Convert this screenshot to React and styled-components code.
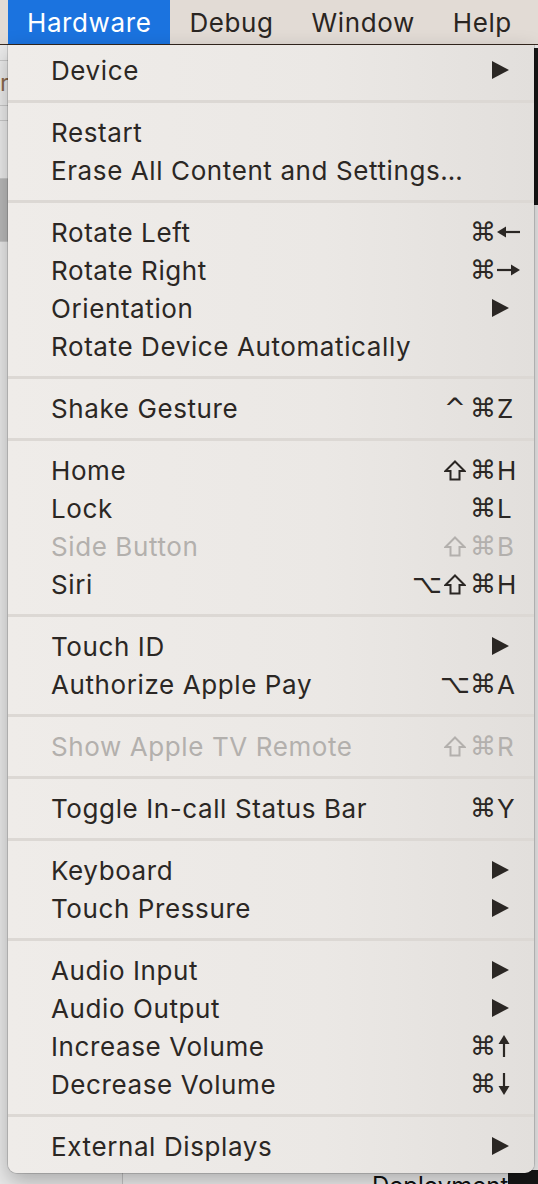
import React from 'react'
import styled, { createGlobalStyle } from 'styled-components'

const GlobalStyle = createGlobalStyle`
  html, body {
    margin: 0;
    padding: 0;
  }
  body {
    background: #ececec;
    font-family: Inter, "Noto Sans", sans-serif;
  }
`

const Screen = styled.div`
  position: relative;
  width: 538px;
  height: 1184px;
  overflow: hidden;
  display: flex;
  flex-direction: column;
  background: #ececec;
`

const MenuBar = styled.div`
  height: 44px;
  flex-shrink: 0;
  display: flex;
  align-items: stretch;
  padding-left: 8px;
  background: #e2dbd5;
  border-bottom: 1px solid #3b2c22;
`

const MenuTitle = styled.div`
  display: flex;
  align-items: center;
  padding: 0 19px;
  font-size: 26px;
  letter-spacing: 0.6px;
  color: ${p => (p.$active ? '#ffffff' : '#2a2522')};
  background: ${p => (p.$active ? '#1b73df' : 'transparent')};
`

// the window behind the open menu
const Desktop = styled.div`
  flex: 1;
  display: flex;
`

const Sidebar = styled.div`
  width: 123px;
  flex-shrink: 0;
  box-sizing: border-box;
  display: flex;
  flex-direction: column;
  background: #e6e6e6;
  border-right: 1px solid #c4c4c4;
`

const SideRow = styled.div`
  height: ${p => p.$h}px;
  background: ${p => p.$bg || '#ebebeb'};
  border-bottom: 1px solid #c9c9c9;
  font-size: 24px;
  line-height: ${p => p.$h}px;
  color: #8a6a50;
  overflow: hidden;
  white-space: nowrap;
`

const SideFill = styled.div`
  flex: 1;
  background: #e9e9e9;
`

const Main = styled.div`
  flex: 1;
  display: flex;
  flex-direction: column;
  background: #ececec;
`

const EditorTop = styled.div`
  height: 157px;
  margin-top: 3px;
  display: flex;
`

const Spacer = styled.div`
  flex: 1;
`

const DarkColumn = styled.div`
  width: 45px;
  flex-shrink: 0;
  background: #161616;
`

const Footer = styled.div`
  height: 14px;
  display: flex;
  overflow: hidden;
  background: #ededed;
`

const FooterText = styled.div`
  flex: 1;
  padding: 4px 0 0 249px;
  font-size: 24px;
  line-height: 24px;
  color: #111;
  white-space: nowrap;
`

// dropdown menu
const Dropdown = styled.div`
  position: absolute;
  top: 45px;
  left: 8px;
  width: 526px;
  padding: 6px 0 8px;
  box-sizing: border-box;
  background: linear-gradient(90deg, #efece9 0%, #ebe8e5 60%, #e2dfdc 100%);
  border-radius: 0 0 9px 9px;
  box-shadow: 0 0 0 1px rgba(0, 0, 0, 0.14), 0 8px 22px rgba(0, 0, 0, 0.28);
`

const Item = styled.div`
  height: 38px;
  display: flex;
  align-items: center;
  padding: 0 11px 0 43px;
  font-size: 26px;
  letter-spacing: 0.6px;
  color: ${p => (p.$disabled ? '#b3b0ad' : '#2b2724')};
`

const Label = styled.span`
  flex: 1;
  white-space: nowrap;
`

const Separator = styled.div`
  height: 24px;
  display: flex;
  align-items: center;
  &::after {
    content: '';
    flex: 1;
    height: 3px;
    background: #dcd8d4;
  }
`

const Shortcut = styled.span`
  display: flex;
  align-items: center;
`

const Mod = styled.span`
  width: 28px;
  height: 30px;
  display: flex;
  align-items: center;
  justify-content: center;
  font-family: "DejaVu Sans", sans-serif;
  font-size: 26px;
  letter-spacing: 0;
`

const Key = styled.span`
  width: 26px;
  height: 30px;
  display: flex;
  align-items: center;
  font-size: 26px;
  letter-spacing: 0;
`

const Icon = styled.svg`
  fill: currentColor;
  stroke: currentColor;
`

const Arrow = styled.svg`
  width: 17px;
  height: 18px;
  margin-right: 14px;
  fill: currentColor;
`

const SubmenuArrow = () => (
  <Arrow viewBox="0 0 17 18">
    <polygon points="0,0 17,9 0,18" />
  </Arrow>
)

const ShiftIcon = () => (
  <Icon width="22" height="21" viewBox="0 0 22 21">
    <polygon
      points="11,1.5 20.5,11 15.5,11 15.5,19.5 6.5,19.5 6.5,11 1.5,11"
      fill="none"
      strokeWidth="2"
      strokeLinejoin="miter"
    />
  </Icon>
)

const arrowShapes = {
  '←': { w: 23, h: 14, line: [7, 7, 23, 7], head: '0,7 9,1.5 9,12.5' },
  '→': { w: 23, h: 14, line: [0, 7, 16, 7], head: '23,7 14,1.5 14,12.5' },
  '↑': { w: 14, h: 22, line: [7, 7, 7, 22], head: '7,0 1.5,9 12.5,9' },
  '↓': { w: 14, h: 22, line: [7, 0, 7, 15], head: '7,22 1.5,13 12.5,13' },
}

const KeyArrow = ({ dir }) => {
  const s = arrowShapes[dir]
  const [x1, y1, x2, y2] = s.line
  return (
    <Icon width={s.w} height={s.h} viewBox={`0 0 ${s.w} ${s.h}`}>
      <line x1={x1} y1={y1} x2={x2} y2={y2} strokeWidth="2.2" />
      <polygon points={s.head} stroke="none" />
    </Icon>
  )
}

const sections = [
  [{ label: 'Device', sub: true }],
  [{ label: 'Restart' }, { label: 'Erase All Content and Settings…' }],
  [
    { label: 'Rotate Left', mods: ['⌘'], key: '←' },
    { label: 'Rotate Right', mods: ['⌘'], key: '→' },
    { label: 'Orientation', sub: true },
    { label: 'Rotate Device Automatically' },
  ],
  [{ label: 'Shake Gesture', mods: ['^', '⌘'], key: 'Z' }],
  [
    { label: 'Home', mods: ['⇧', '⌘'], key: 'H' },
    { label: 'Lock', mods: ['⌘'], key: 'L' },
    { label: 'Side Button', mods: ['⇧', '⌘'], key: 'B', disabled: true },
    { label: 'Siri', mods: ['⌥', '⇧', '⌘'], key: 'H' },
  ],
  [
    { label: 'Touch ID', sub: true },
    { label: 'Authorize Apple Pay', mods: ['⌥', '⌘'], key: 'A' },
  ],
  [{ label: 'Show Apple TV Remote', mods: ['⇧', '⌘'], key: 'R', disabled: true }],
  [{ label: 'Toggle In-call Status Bar', mods: ['⌘'], key: 'Y' }],
  [
    { label: 'Keyboard', sub: true },
    { label: 'Touch Pressure', sub: true },
  ],
  [
    { label: 'Audio Input', sub: true },
    { label: 'Audio Output', sub: true },
    { label: 'Increase Volume', mods: ['⌘'], key: '↑' },
    { label: 'Decrease Volume', mods: ['⌘'], key: '↓' },
  ],
  [{ label: 'External Displays', sub: true }],
]

const MenuItem = ({ item }) => (
  <Item $disabled={item.disabled}>
    <Label>{item.label}</Label>
    {item.sub && <SubmenuArrow />}
    {item.key && (
      <Shortcut>
        {item.mods.map((m, i) => (
          <Mod key={i}>{m === '⇧' ? <ShiftIcon /> : m}</Mod>
        ))}
        <Key>{arrowShapes[item.key] ? <KeyArrow dir={item.key} /> : item.key}</Key>
      </Shortcut>
    )}
  </Item>
)

const App = () => {
  return (
    <Screen>
      <GlobalStyle />
      <MenuBar>
        <MenuTitle $active>Hardware</MenuTitle>
        <MenuTitle>Debug</MenuTitle>
        <MenuTitle>Window</MenuTitle>
        <MenuTitle>Help</MenuTitle>
      </MenuBar>

      <Desktop>
        <Sidebar>
          <SideRow $h={15} />
          <SideRow $h={44}>ro</SideRow>
          <SideRow $h={14} />
          <SideRow $h={57} />
          <SideRow $h={62} $bg="#b9b9b9" />
          <SideFill />
        </Sidebar>
        <Main>
          <EditorTop>
            <Spacer />
            <DarkColumn />
          </EditorTop>
          <Spacer />
          <Footer>
            <FooterText>Deployment</FooterText>
            <DarkColumn />
          </Footer>
        </Main>
      </Desktop>

      <Dropdown>
        {sections.map((section, si) => (
          <React.Fragment key={si}>
            {si > 0 && <Separator />}
            {section.map(item => (
              <MenuItem key={item.label} item={item} />
            ))}
          </React.Fragment>
        ))}
      </Dropdown>
    </Screen>
  )
}

export default App
